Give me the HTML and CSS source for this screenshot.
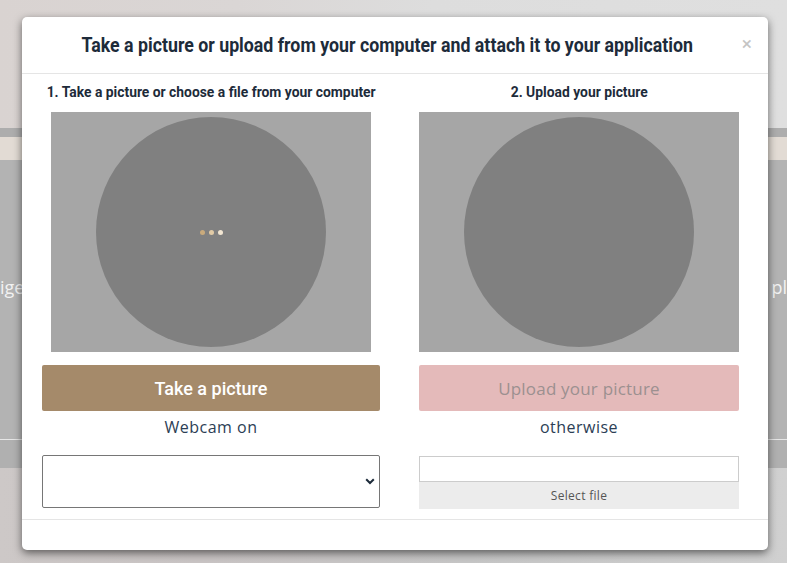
FILE: index.html
```html
<!DOCTYPE html>
<html lang="en">
<head>
    <meta charset="UTF-8">
    <meta name="viewport" content="width=device-width, initial-scale=1.0">
    <title>Attach a picture</title>
    <link rel="stylesheet" href="styles.css">
</head>
<body>
    <div class="page">
        <div class="page-top"></div>
        <div class="page-strip"></div>
        <div class="page-band"></div>
        <div class="page-hero">
            <span class="hero-left">ige</span>
            <span class="hero-right">pl</span>
        </div>
        <div class="page-under"></div>
        <div class="page-bottom"></div>
    </div>

    <div class="modal">
        <header class="modal-header">
            <h2>Take a picture or upload from your computer and attach it to your application</h2>
            <span class="close">&times;</span>
        </header>

        <section class="modal-body">
            <div class="col col-left">
                <h4>1. Take a picture or choose a file from your computer</h4>
                <div class="cam-box">
                    <div class="cam-circle">
                        <span class="dot d1"></span>
                        <span class="dot d2"></span>
                        <span class="dot d3"></span>
                    </div>
                </div>
                <button class="btn btn-take">Take a picture</button>
                <p class="note">Webcam on</p>
                <div class="select-wrap">
                    <select class="cam-select">
                        <option></option>
                    </select>
                    <svg class="chevron" width="10" height="7" viewBox="0 0 10 7">
                        <path d="M1.2 1.2 L5 5 L8.8 1.2" fill="none" stroke="#1d2b3a" stroke-width="2"/>
                    </svg>
                </div>
            </div>

            <div class="col col-right">
                <h4>2. Upload your picture</h4>
                <div class="cam-box">
                    <div class="cam-circle"></div>
                </div>
                <button class="btn btn-upload" disabled>Upload your picture</button>
                <p class="note">otherwise</p>
                <div class="file-wrap">
                    <input type="text" class="file-name">
                    <button class="file-btn">Select file</button>
                </div>
            </div>
        </section>

        <footer class="modal-footer"></footer>
    </div>
</body>
</html>
```

FILE: styles.css
```css
* {
    margin: 0;
    padding: 0;
    box-sizing: border-box;
}

body {
    width: 787px;
    height: 563px;
    overflow: hidden;
    font-family: "Open Sans", Lato, sans-serif;
    color: #2c3e50;
    background: #c8c8c8;
}

/* page behind the overlay */
.page {
    display: flex;
    flex-direction: column;
    height: 563px;
}

.page-top {
    height: 128px;
    background: linear-gradient(90deg, #d9d3d1 0%, #dad6d5 30%, #dddddd 55%, #dfdfdf 100%);
}

.page-strip {
    height: 9px;
    background: #adadad;
}

.page-band {
    height: 23px;
    background: #e2dbd4;
}

.page-hero {
    height: 280px;
    background: #b3b3b3;
    border-bottom: 1px solid #e6e6e6;
    display: flex;
    justify-content: space-between;
    align-items: center;
    padding-bottom: 26px;
    font-size: 18px;
    color: #f2f2f2;
}

.page-under {
    height: 28px;
    background: #b0b0b0;
}

.page-bottom {
    flex: 1;
    background: linear-gradient(90deg, #cdc8c7 0%, #c9c4c4 25%, #c6c6c6 60%, #d0d0d0 100%);
}

/* modal */
.modal {
    position: absolute;
    left: 22px;
    top: 17px;
    width: 746px;
    height: 533px;
    background: #fff;
    border-radius: 5px;
    box-shadow: 0 3px 8px rgba(0,0,0,0.55);
    display: flex;
    flex-direction: column;
}

.modal-header {
    position: relative;
    height: 57px;
    border-bottom: 1px solid #e5e5e5;
    display: flex;
    align-items: center;
    justify-content: center;
    padding-right: 15px;
}

.modal-header h2,
.col h4 {
    font-family: Roboto, sans-serif;
    font-weight: bold;
    color: #1d2b3a;
    white-space: nowrap;
}

.modal-header h2 {
    font-size: 20px;
    transform: scaleX(0.888);
}

.close {
    position: absolute;
    right: 16px;
    top: 15px;
    font-family: Roboto, sans-serif;
    font-size: 19px;
    color: #c4c4c4;
}

.modal-body {
    flex: 1;
    display: grid;
    grid-template-columns: 368px 368px;
    padding: 8px 5px 0;
}

.col {
    display: flex;
    flex-direction: column;
    align-items: center;
}

.col-left {
    padding: 0 15px;
}

.col-right {
    padding: 0 24px;
}

.col h4 {
    font-size: 14px;
    height: 20px;
    line-height: 20px;
    margin-bottom: 10px;
    transform: scaleX(0.99);
}

.cam-box {
    width: 320px;
    height: 240px;
    background: #a6a6a6;
    display: flex;
    align-items: center;
    justify-content: center;
}

.cam-circle {
    width: 230px;
    height: 230px;
    border-radius: 50%;
    background: #808080;
    display: flex;
    align-items: center;
    justify-content: center;
    gap: 4px;
}

.dot {
    width: 5px;
    height: 5px;
    border-radius: 50%;
}

.d1 { background: #c9aa7c; }
.d2 { background: #e2cba6; }
.d3 { background: #f2e6d2; }

.btn {
    width: 100%;
    height: 46px;
    margin-top: 13px;
    border: none;
    border-radius: 2px;
}

.btn-take {
    background: #a58a6a;
    color: #fff;
    font-family: Roboto, sans-serif;
    font-weight: 500;
    font-size: 18px;
}

.btn-upload {
    background: #e4baba;
    color: #9c9090;
    font-family: "Open Sans", sans-serif;
    font-size: 17px;
    letter-spacing: 0.2px;
}

.note {
    font-size: 16px;
    line-height: 31px;
    letter-spacing: 0.5px;
    color: #2c3e55;
    padding-top: 1px;
    margin-bottom: 12px;
}

.select-wrap {
    position: relative;
    width: 100%;
}

.cam-select {
    width: 100%;
    height: 53px;
    border: 1px solid #767676;
    border-radius: 2px;
    background: #fff;
    appearance: none;
}

.chevron {
    position: absolute;
    right: 5px;
    top: 23px;
}

.file-wrap {
    width: 100%;
    margin-top: 1px;
}

.file-name {
    display: block;
    width: 100%;
    height: 26px;
    border: 1px solid #cccccc;
    background: #fff;
}

.file-btn {
    display: block;
    width: 100%;
    height: 27px;
    border: none;
    background: #ececec;
    color: #555;
    font-family: "Open Sans", sans-serif;
    font-size: 12px;
    letter-spacing: 0.3px;
}

.modal-footer {
    height: 31px;
    border-top: 1px solid #e5e5e5;
}
```
